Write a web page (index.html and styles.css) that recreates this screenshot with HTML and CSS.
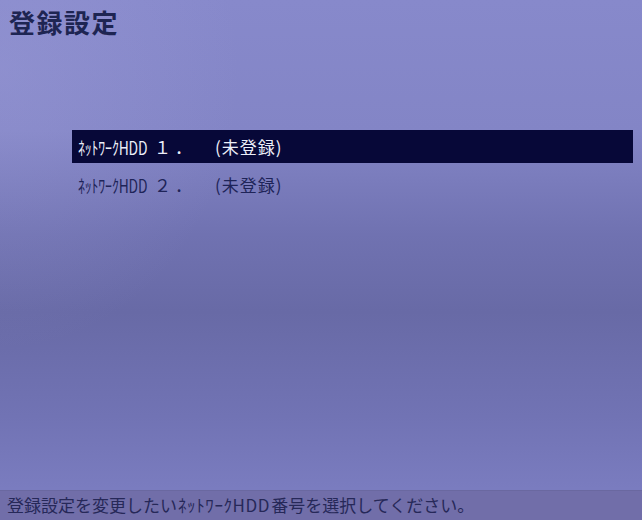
FILE: index.html
```html
<!DOCTYPE html>
<html lang="ja">
<head>
<meta charset="utf-8">
<title>登録設定</title>
<link rel="stylesheet" href="styles.css">
</head>
<body>
<div class="screen">
  <header class="title">登録設定</header>
  <main class="menu">
    <div class="item selected">
      <span class="name"><span class="cond">ﾈｯﾄﾜｰｸHDD</span><span class="num">１．</span></span>
      <span class="status">(未登録)</span>
    </div>
    <div class="item">
      <span class="name"><span class="cond">ﾈｯﾄﾜｰｸHDD</span><span class="num">２．</span></span>
      <span class="status">(未登録)</span>
    </div>
  </main>
  <footer class="guide">登録設定を変更したい<span class="gkana">ﾈｯﾄﾜｰｸHDD</span>番号を選択してください。</footer>
</div>
</body>
</html>
```

FILE: styles.css
```css
html, body {
  margin: 0;
  padding: 0;
}

body {
  width: 642px;
  height: 520px;
  overflow: hidden;
  font-family: "Noto Sans CJK JP", "Noto Sans", sans-serif;
}

.screen {
  width: 642px;
  height: 520px;
  display: flex;
  flex-direction: column;
  background:
    radial-gradient(ellipse 240px 280px at 0px 70px, rgba(165, 165, 222, 0.28), rgba(165, 165, 222, 0) 100%),
    linear-gradient(180deg, #8789cb 0%, #8385c6 25%, #7072b1 45%, #686aa6 60%, #7173b4 80%, #7a7cbf 94%);
}

.title {
  padding: 5px 0 0 9px;
  height: 130px;
  box-sizing: border-box;
  font-size: 26px;
  font-weight: 700;
  color: #1e2552;
  letter-spacing: 1.5px;
  line-height: 34px;
}

.menu {
  flex: 1;
  display: flex;
  flex-direction: column;
  gap: 5px;
  padding-left: 72px;
  padding-right: 9px;
}

.item {
  height: 33px;
  display: flex;
  align-items: center;
  padding-left: 6px;
  font-size: 16px;
  color: #1e2458;
}

.item.selected {
  background: #070838;
  color: #eceef8;
}

.name {
  width: 137px;
  display: flex;
  align-items: center;
}

.cond {
  display: inline-block;
  font-size: 18px;
  transform: scaleX(0.77);
  transform-origin: left center;
  margin-right: -20px;
  letter-spacing: -0.2px;
}

.num {
  margin-left: 6px;
  font-size: 17px;
  letter-spacing: 4px;
}

.status {
  font-size: 17px;
  letter-spacing: 1px;
}

.guide {
  height: 30px;
  box-sizing: border-box;
  padding: 1px 0 0 7px;
  background: #716ea9;
  border-top: 1px solid #6a68a0;
  font-size: 17px;
  line-height: 26px;
  color: #262858;
  white-space: nowrap;
}

.gkana {
  letter-spacing: 0.6px;
  margin: 0 1px;
}
```
